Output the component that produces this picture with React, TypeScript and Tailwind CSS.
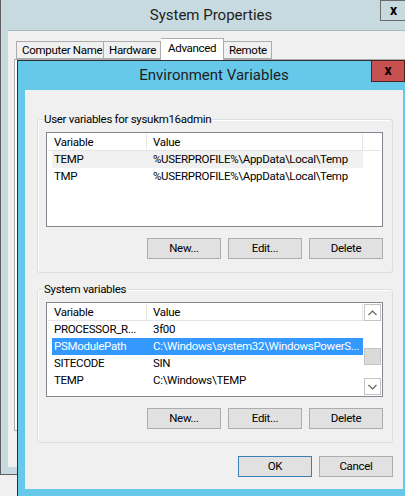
import React from "react";

const font = { fontFamily: 'Roboto, "Noto Sans", sans-serif' };

type Row = { name: string; value: string; state?: "hover" | "selected" };

const userRows: Row[] = [
  { name: "TEMP", value: "%USERPROFILE%\\AppData\\Local\\Temp", state: "hover" },
  { name: "TMP", value: "%USERPROFILE%\\AppData\\Local\\Temp" },
];

const systemRows: Row[] = [
  { name: "PROCESSOR_R...", value: "3f00" },
  { name: "PSModulePath", value: "C:\\Windows\\system32\\WindowsPowerS...", state: "selected" },
  { name: "SITECODE", value: "SIN" },
  { name: "TEMP", value: "C:\\Windows\\TEMP" },
];

function Button({ label, primary }: { label: string; primary?: boolean }) {
  return (
    <div
      className={`w-[74px] h-[21px] flex items-center justify-center text-[11.5px] bg-[#e1e1e1] border ${
        primary ? "border-[#3c7fb1]" : "border-[#adadad]"
      }`}
    >
      {label}
    </div>
  );
}

function Header() {
  return (
    <div className="flex h-[17px] text-[11.5px] leading-[16px] border-b border-[#e5e5e5] bg-white">
      <div className="w-[99px] pl-[6px] border-r border-[#e5e5e5]">Variable</div>
      <div className="w-[216px] pl-[6px] border-r border-[#e5e5e5]">Value</div>
    </div>
  );
}

function Rows({ rows }: { rows: Row[] }) {
  return (
    <div className="pl-[4px]">
      {rows.map((r) => (
        <div
          key={r.name}
          className={`flex w-[311px] h-[17px] text-[11.5px] leading-[17px] whitespace-nowrap ${
            r.state === "selected"
              ? "bg-[#3399ff] text-white"
              : r.state === "hover"
              ? "bg-[#f0f0f0]"
              : ""
          }`}
        >
          <div className="w-[99px] pl-[2px] overflow-hidden">{r.name}</div>
          <div className="pl-[2px]">{r.value}</div>
        </div>
      ))}
    </div>
  );
}

function Chevron({ up }: { up?: boolean }) {
  return (
    <svg width="9" height="6" viewBox="0 0 9 6">
      <path
        d={up ? "M0.5 5 L4.5 1 L8.5 5" : "M0.5 1 L4.5 5 L8.5 1"}
        fill="none"
        stroke="#606060"
        strokeWidth="1.1"
      />
    </svg>
  );
}

function ScrollBar() {
  return (
    <div className="w-[17px] h-full flex flex-col bg-white">
      <div className="h-[17px] border border-[#c4c4c4] flex items-center justify-center">
        <Chevron up />
      </div>
      <div className="h-[27px]" />
      <div className="h-[17px] bg-[#dadada] border border-[#c4c4c4]" />
      <div className="flex-1" />
      <div className="h-[17px] border border-[#c4c4c4] flex items-center justify-center">
        <Chevron />
      </div>
    </div>
  );
}

function Group({
  title,
  rows,
  scroll,
}: {
  title: string;
  rows: Row[];
  scroll?: boolean;
}) {
  return (
    <div className="relative w-[356px] h-[154px] border border-[#d5dfe5] rounded-[3px] shadow-[inset_1px_1px_0_#ffffff]">
      <span className="absolute left-[5px] -top-[9px] px-[1px] bg-[#f0f0f0] text-[11.5px] leading-[16px]">
        {title}
      </span>
      <div className="mt-[12px] ml-[8px] w-[337px] h-[95px] border border-[#828790] bg-white p-[1px] flex overflow-hidden">
        <div className="flex-1 overflow-hidden">
          <Header />
          <Rows rows={rows} />
        </div>
        {scroll && <ScrollBar />}
      </div>
      <div className="mt-[11px] ml-[8px] w-[337px] flex justify-end gap-[7px]">
        <Button label="New..." />
        <Button label="Edit..." />
        <Button label="Delete" />
      </div>
    </div>
  );
}

export default function App() {
  return (
    <div
      className="relative w-[405px] h-[496px] overflow-hidden bg-[#f0f0f0] text-black tracking-[-0.3px]"
      style={font}
    >
      {/* System Properties (inactive window behind) */}
      <div className="absolute left-0 top-0 w-[421px] h-[475px] border-l border-b border-[#5f5f5f] bg-[#c6dadf]">
        <div className="h-[30px] flex items-center justify-center text-[15px] tracking-normal text-[#1e1e1e]">
          System Properties
        </div>
        <div className="absolute left-[379px] top-0 w-[27px] h-[21px] border border-[#6b6b6b] flex items-center justify-center text-[14px] font-bold leading-none pb-[2px]">
          x
        </div>
        <div className="ml-[7px] h-[437px] bg-[#f0f0f0] border-t border-[#aab8bc] pl-[6px] pt-[7px]">
          <div className="flex items-end h-[21px] ml-[2px] text-[11.5px] whitespace-nowrap">
            <div className="w-[88px] h-[18px] border border-[#acacac] bg-[#f0f0f0] pl-[5px] leading-[17px]">
              Computer Name
            </div>
            <div className="w-[57px] h-[18px] border border-l-0 border-[#acacac] bg-[#f0f0f0] pl-[5px] leading-[17px]">
              Hardware
            </div>
            <div className="w-[63px] h-[22px] border border-l-0 border-b-0 border-[#acacac] bg-white pl-[7px] leading-[18px] -mb-[1px]">
              Advanced
            </div>
            <div className="w-[48px] h-[18px] border border-l-0 border-[#acacac] bg-[#f0f0f0] pl-[5px] leading-[17px]">
              Remote
            </div>
          </div>
          <div className="w-[420px] h-[372px] border border-[#acacac] bg-white" />
        </div>
      </div>

      {/* Environment Variables (active dialog) */}
      <div className="absolute left-[17px] top-[60px] w-[394px] h-[445px] border border-[#2e2e2e] bg-[#66c9ea]">
        <div className="h-[29px] flex items-center justify-center text-[15px] tracking-normal text-[#1e1e1e]">
          Environment Variables
        </div>
        <div className="absolute left-[353px] -top-[1px] w-[34px] h-[22px] border border-[#4a2222] bg-[#c75050] flex items-center justify-center text-[14px] font-bold leading-none pb-[2px]">
          x
        </div>
        <div className="ml-[7px] w-[378px] h-[399px] bg-[#f0f0f0] pl-[12px] pt-[29px]">
          <Group title="User variables for sysukm16admin" rows={userRows} />
          <div className="mt-[16px]">
            <Group title="System variables" rows={systemRows} scroll />
          </div>
          <div className="mt-[13px] w-[356px] flex justify-end gap-[7px]">
            <Button label="OK" primary />
            <Button label="Cancel" />
          </div>
        </div>
      </div>
    </div>
  );
}
